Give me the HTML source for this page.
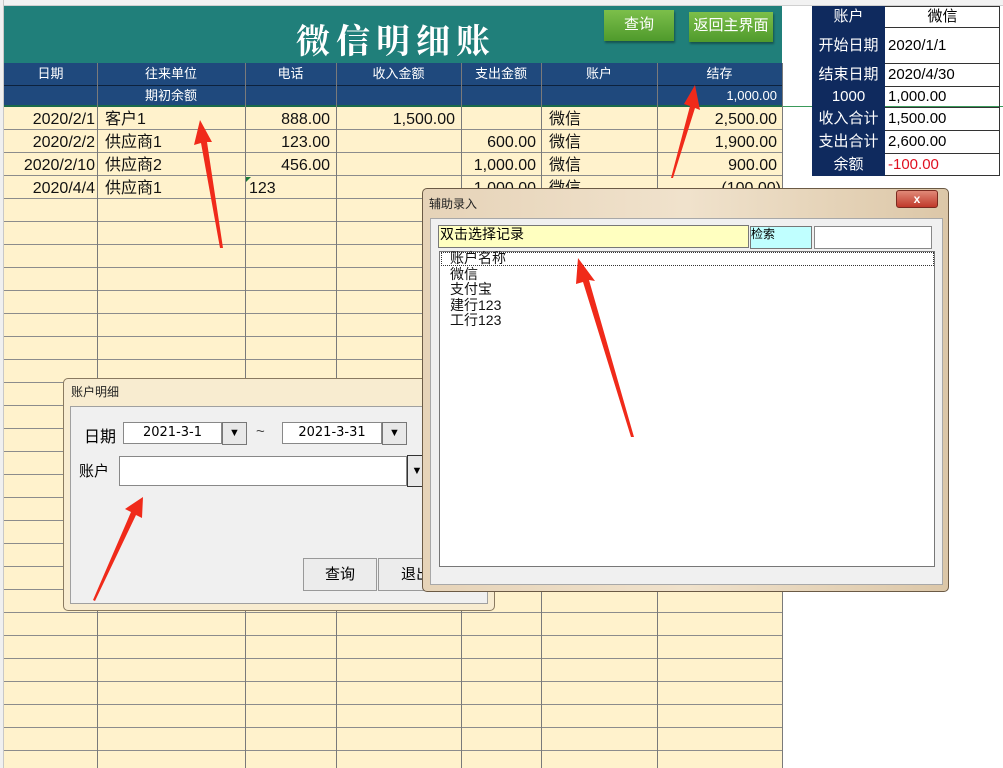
<!DOCTYPE html>
<html><head><meta charset="utf-8"><style>
*{margin:0;padding:0;box-sizing:border-box}
body{width:1003px;height:768px;position:relative;overflow:hidden;background:#fff;font-family:"Liberation Sans","Noto Sans CJK SC",sans-serif;}
.a{position:absolute}
.grid{left:4px;top:107px;width:778px;height:661px;background:#fff2cc;
background-image:repeating-linear-gradient(to bottom,transparent 0,transparent 22px,#8c8c8c 22px,#8c8c8c 23px);}
.v{position:absolute;width:1px;background:#7a7a7a}
.t{position:absolute;font-size:16px;color:#111;white-space:nowrap;line-height:25px}
.h{position:absolute;font-size:13px;color:#fff;text-align:center;line-height:22px}
.rp{position:absolute;font-size:15px;line-height:21px;white-space:nowrap}
</style></head><body>
<div class="a" style="left:0;top:0;width:1003px;height:6px;background:#f2f2f2;border-bottom:1px solid #d0d0d0"></div>
<div class="a" style="left:0;top:0;width:4px;height:768px;background:#f0f0f0;border-right:1px solid #c8c8c8"></div>
<div class="a" style="left:4px;top:6px;width:778px;height:57px;background:#207f7a"></div>
<div class="a" style="left:296px;top:14px;font-size:34px;color:#fff;font-family:'Noto Serif CJK SC',serif;font-weight:bold;letter-spacing:6px">微信明细账</div>
<div class="a" style="left:604px;top:10px;width:70px;height:31px;background:linear-gradient(#7cbf4a,#4f9a2c);color:#fff;font-size:15px;text-align:center;line-height:29px;box-shadow:1px 2px 2px rgba(0,0,0,.35)">查询</div>
<div class="a" style="left:689px;top:12px;width:84px;height:30px;background:linear-gradient(#7cbf4a,#4f9a2c);color:#fff;font-size:15px;text-align:center;line-height:28px;box-shadow:1px 2px 2px rgba(0,0,0,.35)">返回主界面</div>
<div class="a" style="left:4px;top:63px;width:778px;height:44px;background:#1f497d;border-bottom:2px solid #1a6a4a"></div>
<div class="a" style="left:4px;top:85px;width:778px;height:1px;background:#0d223d"></div>
<div class="h" style="left:4px;top:63px;width:93px">日期</div>
<div class="h" style="left:97px;top:63px;width:148px">往来单位</div>
<div class="h" style="left:245px;top:63px;width:91px">电话</div>
<div class="h" style="left:336px;top:63px;width:125px">收入金额</div>
<div class="h" style="left:461px;top:63px;width:80px">支出金额</div>
<div class="h" style="left:541px;top:63px;width:116px">账户</div>
<div class="h" style="left:657px;top:63px;width:125px">结存</div>
<div class="h" style="left:97px;top:85px;width:148px">期初余额</div>
<div class="h" style="left:657px;top:85px;width:120px;text-align:right">1,000.00</div>
<div class="a" style="left:782px;top:106px;width:221px;height:1px;background:#3a9a5a"></div>
<div class="a grid"></div>
<div class="v" style="left:97px;top:63px;height:705px"></div>
<div class="v" style="left:245px;top:63px;height:705px"></div>
<div class="v" style="left:336px;top:63px;height:705px"></div>
<div class="v" style="left:461px;top:63px;height:705px"></div>
<div class="v" style="left:541px;top:63px;height:705px"></div>
<div class="v" style="left:657px;top:63px;height:705px"></div>
<div class="v" style="left:782px;top:63px;height:705px"></div>
<div class="t" style="right:908px;top:107px">2020/2/1</div><div class="t" style="left:105px;top:107px">客户1</div><div class="t" style="right:673px;top:107px">888.00</div><div class="t" style="right:548px;top:107px">1,500.00</div><div class="t" style="left:549px;top:107px">微信</div><div class="t" style="right:226px;top:107px">2,500.00</div>
<div class="t" style="right:908px;top:130px">2020/2/2</div><div class="t" style="left:105px;top:130px">供应商1</div><div class="t" style="right:673px;top:130px">123.00</div><div class="t" style="right:467px;top:130px">600.00</div><div class="t" style="left:549px;top:130px">微信</div><div class="t" style="right:226px;top:130px">1,900.00</div>
<div class="t" style="right:908px;top:153px">2020/2/10</div><div class="t" style="left:105px;top:153px">供应商2</div><div class="t" style="right:673px;top:153px">456.00</div><div class="t" style="right:467px;top:153px">1,000.00</div><div class="t" style="left:549px;top:153px">微信</div><div class="t" style="right:226px;top:153px">900.00</div>
<div class="t" style="right:908px;top:176px">2020/4/4</div><div class="t" style="left:105px;top:176px">供应商1</div><div class="t" style="left:249px;top:176px">123</div><div class="t" style="right:467px;top:176px">1,000.00</div><div class="t" style="left:549px;top:176px">微信</div><div class="t" style="right:222px;top:176px">(100.00)</div>
<div class="a" style="left:246px;top:177px;width:0;height:0;border-top:5px solid #1a7a3a;border-right:5px solid transparent"></div>
<div class="a" style="left:812px;top:6px;width:73px;height:170px;background:#0f2a5e"></div>
<div class="a" style="left:885px;top:6px;width:115px;height:170px;border:1px solid #333;border-left:none"></div>
<div class="rp" style="left:812px;top:6px;width:73px;text-align:center;color:#fff">账户</div><div class="rp" style="left:885px;top:6px;width:115px;text-align:center">微信</div>
<div class="rp" style="left:812px;top:35px;width:73px;text-align:center;color:#fff">开始日期</div><div class="rp" style="left:888px;top:35px">2020/1/1</div>
<div class="rp" style="left:812px;top:64px;width:73px;text-align:center;color:#fff">结束日期</div><div class="rp" style="left:888px;top:64px">2020/4/30</div>
<div class="rp" style="left:812px;top:86px;width:73px;text-align:center;color:#fff">1000</div><div class="rp" style="left:888px;top:86px">1,000.00</div>
<div class="rp" style="left:812px;top:108px;width:73px;text-align:center;color:#fff">收入合计</div><div class="rp" style="left:888px;top:108px">1,500.00</div>
<div class="rp" style="left:812px;top:131px;width:73px;text-align:center;color:#fff">支出合计</div><div class="rp" style="left:888px;top:131px">2,600.00</div>
<div class="rp" style="left:812px;top:154px;width:73px;text-align:center;color:#fff">余额</div><div class="rp" style="left:888px;top:154px;color:#e01020">-100.00</div>
<div class="a" style="left:885px;top:27px;width:115px;height:1px;background:#333"></div>
<div class="a" style="left:885px;top:63px;width:115px;height:1px;background:#333"></div>
<div class="a" style="left:885px;top:86px;width:115px;height:1px;background:#333"></div>
<div class="a" style="left:885px;top:107px;width:115px;height:1px;background:#333"></div>
<div class="a" style="left:885px;top:130px;width:115px;height:1px;background:#333"></div>
<div class="a" style="left:885px;top:153px;width:115px;height:1px;background:#333"></div>
<!-- dialog 2 -->
<div class="a" style="left:63px;top:378px;width:432px;height:233px;background:#f8ecd0;border:1px solid #8a7a60;border-radius:5px"></div>
<div class="a" style="left:71px;top:383px;font-size:12px;color:#222">账户明细</div>
<div class="a" style="left:70px;top:406px;width:418px;height:198px;background:#f0f0f0;border:1px solid #a0a0a0"></div>
<div class="a" style="left:84px;top:423px;font-size:16px">日期</div>
<div class="a" style="left:123px;top:422px;width:99px;height:22px;background:#fff;border:1px solid #888;font-family:'DejaVu Sans';font-size:13px;text-align:center;line-height:20px">2021-3-1</div>
<div class="a" style="left:222px;top:422px;width:25px;height:23px;background:#e8e8e8;border:1px solid #777;font-size:11px;text-align:center;line-height:21px">▼</div>
<div class="a" style="left:256px;top:423px;font-size:15px;color:#444">~</div>
<div class="a" style="left:282px;top:422px;width:100px;height:22px;background:#fff;border:1px solid #888;font-family:'DejaVu Sans';font-size:13px;text-align:center;line-height:20px">2021-3-31</div>
<div class="a" style="left:382px;top:422px;width:25px;height:23px;background:#e8e8e8;border:1px solid #777;font-size:11px;text-align:center;line-height:21px">▼</div>
<div class="a" style="left:79px;top:460px;font-size:15px">账户</div>
<div class="a" style="left:119px;top:456px;width:288px;height:30px;background:#fff;border:1px solid #888"></div>
<div class="a" style="left:407px;top:455px;width:20px;height:32px;background:#e8e8e8;border:1px solid #333;font-size:11px;line-height:30px;text-align:center">▼</div>
<div class="a" style="left:303px;top:558px;width:74px;height:33px;background:#ececec;border:1px solid #999;font-size:15px;text-align:center;line-height:31px">查询</div>
<div class="a" style="left:378px;top:558px;width:60px;height:33px;background:#ececec;border:1px solid #999;font-size:15px;line-height:31px;padding-left:22px">退出</div>
<!-- dialog 1 -->
<div class="a" style="left:422px;top:188px;width:527px;height:404px;background:linear-gradient(90deg,#e6d3b8,#f0e2cc,#dcc7a8);border:1px solid #6b5a45;border-radius:5px"></div>
<div class="a" style="left:429px;top:195px;font-size:12px;color:#222">辅助录入</div>
<div class="a" style="left:896px;top:190px;width:42px;height:18px;background:linear-gradient(#e08a78,#c0392b);border:1px solid #7a2a20;border-radius:3px;color:#fff;font-size:12px;text-align:center;line-height:16px;font-weight:bold">x</div>
<div class="a" style="left:430px;top:218px;width:513px;height:367px;background:#f0f0f0;border:1px solid #a8a8a8"></div>
<div class="a" style="left:438px;top:225px;width:311px;height:23px;background:#ffffc0;border:1px solid #777;font-size:14px;line-height:16px;padding-left:1px">双击选择记录</div>
<div class="a" style="left:750px;top:226px;width:62px;height:23px;background:#c0ffff;border:1px solid #777;font-size:12px;line-height:14px">检索</div>
<div class="a" style="left:814px;top:226px;width:118px;height:23px;background:#fff;border:1px solid #888"></div>
<div class="a" style="left:439px;top:251px;width:496px;height:316px;background:#fff;border:1px solid #777"></div>
<div class="a" style="left:441px;top:252px;width:493px;height:14px;border:1px dotted #333"></div>
<div class="a" style="left:450px;top:251px;font-size:14px;line-height:15.5px;color:#111">账户名称<br>微信<br>支付宝<br>建行123<br>工行123</div>
<svg class="a" style="left:0;top:0" width="1003" height="768">
<g fill="#f02a1a">
<polygon points="200,120 212,142 207,142 223,248 220,248 201,143 194,145"/>
<polygon points="695,85 700,110 695,108 673,178 671,178 690,106 684,104"/>
<polygon points="578,258 595,281 589,280 634,437 631,437 583,282 576,284"/>
<polygon points="143,497 142,518 136,515 95,601 93,600 131,512 125,509"/>
</g></svg>
</body></html>
